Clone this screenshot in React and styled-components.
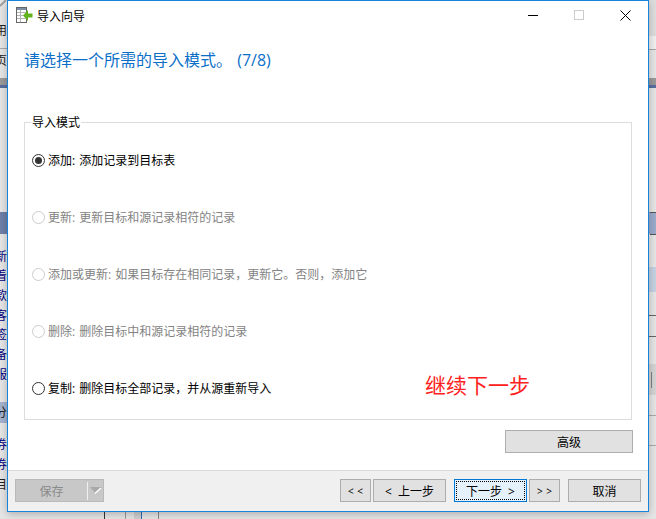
import React from "react";
import styled, { createGlobalStyle } from "styled-components";

const GlobalStyle = createGlobalStyle`
  html, body {
    margin: 0;
    padding: 0;
    width: 656px;
    height: 519px;
    overflow: hidden;
    background: #e6e6e6;
    font-family: "Open Sans", "Noto Sans CJK SC", sans-serif;
  }
`;

const Desktop = styled.div`
  width: 656px;
  height: 519px;
  position: relative;
  overflow: hidden;
`;

const BehindText = styled.span`
  position: absolute;
  left: ${props => props.x}px;
  top: ${props => props.y}px;
  font-size: 12px;
  line-height: 14px;
  color: ${props => props.color || "#000080"};
`;

const BehindBar = styled.div`
  position: absolute;
  left: ${props => props.x}px;
  top: ${props => props.y}px;
  width: ${props => props.w}px;
  height: ${props => props.h}px;
  background: ${props => props.color};
`;

const CornerMark = styled.svg`
  position: absolute;
  left: 0;
  top: 0;
`;

const Dialog = styled.div`
  position: absolute;
  left: 7px;
  top: 0;
  width: 642px;
  height: 512px;
  box-sizing: border-box;
  border: 1px solid #1883d7;
  background: #ffffff;
  display: flex;
  flex-direction: column;
  box-shadow: 0 2px 8px rgba(0, 0, 0, 0.25);
`;

const TitleBar = styled.div`
  height: 29px;
  display: flex;
  align-items: center;
  padding-left: 8px;
  flex-shrink: 0;
`;

const TitleText = styled.span`
  font-size: 12px;
  color: #000000;
  margin-left: 4px;
  flex: 1;
`;

const WindowButton = styled.div`
  width: 46px;
  height: 29px;
  display: flex;
  align-items: center;
  justify-content: center;
`;

const Heading = styled.div`
  margin: 20px 0 0 16px;
  font-size: 16px;
  line-height: 20px;
  height: 20px;
  word-spacing: 1px;
  color: #0b6fc9;
`;

const Content = styled.div`
  flex: 1;
  padding: 52px 16px 0 16px;
  display: flex;
  flex-direction: column;
`;

const Group = styled.div`
  position: relative;
  height: 298px;
  box-sizing: border-box;
  border: 1px solid #dcdcdc;
  padding: 30px 0 0 7px;
  display: flex;
  flex-direction: column;
  gap: 43px;
`;

const GroupLabel = styled.span`
  position: absolute;
  left: 6px;
  top: -7px;
  padding: 0 1px;
  background: #ffffff;
  font-size: 12px;
  line-height: 14px;
  color: #000000;
`;

const OptionRow = styled.div`
  display: flex;
  align-items: center;
  height: 14px;
  font-size: 12px;
  word-spacing: 1px;
  color: ${props => (props.disabled ? "#838383" : "#000000")};
`;

const Radio = styled.span`
  width: 13px;
  height: 13px;
  box-sizing: border-box;
  border-radius: 50%;
  border: 1px solid ${props => (props.disabled ? "#cccccc" : "#333333")};
  margin-right: 3px;
  display: flex;
  align-items: center;
  justify-content: center;

  &::after {
    content: "";
    display: ${props => (props.checked ? "block" : "none")};
    width: 7px;
    height: 7px;
    border-radius: 50%;
    background: #333333;
  }
`;

const Hint = styled.span`
  position: absolute;
  left: 400px;
  top: 249px;
  font-size: 21px;
  line-height: 26px;
  color: #ff2020;
`;

const AdvancedRow = styled.div`
  display: flex;
  justify-content: flex-end;
  margin: 10px -1px 0 0;
`;

const Footer = styled.div`
  height: 41px;
  box-sizing: border-box;
  flex-shrink: 0;
  border-top: 1px solid #d9d9d9;
  background: #f0f0f0;
  display: flex;
  align-items: flex-start;
  padding: 8px 7px 0 7px;
`;

const Button = styled.button`
  width: ${props => props.width || 73}px;
  height: 23px;
  margin-left: ${props => props.gap || 0}px;
  padding: 0;
  box-sizing: border-box;
  border: 1px solid ${props => (props.focused ? "#0078d7" : "#adadad")};
  background: ${props => (props.focused ? "#e5f1fb" : "#e1e1e1")};
  font-family: inherit;
  font-size: ${props => (props.small ? 10 : 12)}px;
  word-spacing: ${props => (props.small ? 1 : 3)}px;
  color: #000000;
  position: relative;
  white-space: pre;

  ${props =>
    props.focused &&
    `&::after {
      content: "";
      position: absolute;
      inset: 1px;
      border: 1px dotted #000000;
    }`}
`;

const SaveSplit = styled.div`
  width: 89px;
  height: 23px;
  box-sizing: border-box;
  border: 1px solid #bababa;
  background: #c8c8c8;
  display: flex;
  align-items: center;
  margin-right: auto;
`;

const SaveLabel = styled.span`
  width: 71px;
  text-align: center;
  font-size: 12px;
  color: #8a8a8a;
`;

const SaveArrow = styled.span`
  flex: 1;
  height: 18px;
  border-left: 1px solid #f0f0f0;
  display: flex;
  align-items: center;
  justify-content: center;
`;

const TableIcon = () => (
  <svg width="17" height="17" viewBox="0 0 17 17">
    <rect x="0.5" y="0.5" width="10" height="15" fill="#fff" stroke="#666666" />
    <path d="M1 1h9v2H1z" fill="#7d8fa5" />
    <path d="M1 5.5h9M1 8.5h9M1 11.5h9M4.5 3v12" stroke="#b4b4b4" fill="none" />
    <path d="M7 8.5l5-5.5v3.5h4.5v4H12V14z" fill="#63b31d" />
  </svg>
);

const backText = [
  { y: 24, t: "用", c: "#222" },
  { y: 54, t: "页", c: "#222" },
  { y: 250, t: "新" },
  { y: 269, t: "着" },
  { y: 289, t: "款" },
  { y: 309, t: "客" },
  { y: 328, t: "签" },
  { y: 348, t: "备" },
  { y: 368, t: "服" },
  { y: 406, t: "分", c: "#222" },
  { y: 438, t: "券" },
  { y: 458, t: "券" },
  { y: 478, t: "目", c: "#222" }
];

const backBars = [
  { x: 0, y: 48, w: 7, h: 1, c: "#a8a8a8" },
  { x: 0, y: 78, w: 7, h: 7, c: "#9a9a9a" },
  { x: 0, y: 85, w: 7, h: 3, c: "#5a6fa0" },
  { x: 0, y: 212, w: 7, h: 22, c: "#6f7fa8" },
  { x: 0, y: 402, w: 7, h: 21, c: "#a5b3cf" },
  { x: 649, y: 0, w: 7, h: 36, c: "#dedede" },
  { x: 649, y: 36, w: 7, h: 13, c: "#f0f0f0" },
  { x: 649, y: 49, w: 7, h: 1, c: "#a8a8a8" },
  { x: 649, y: 78, w: 7, h: 7, c: "#999999" },
  { x: 649, y: 85, w: 7, h: 3, c: "#5a6fa0" },
  { x: 649, y: 212, w: 7, h: 22, c: "#9aaccc" },
  { x: 650, y: 212, w: 6, h: 1, c: "#555555" },
  { x: 650, y: 234, w: 6, h: 1, c: "#555555" },
  { x: 649, y: 267, w: 7, h: 25, c: "#c5d2e2" },
  { x: 649, y: 315, w: 7, h: 1, c: "#666666" },
  { x: 649, y: 336, w: 7, h: 1, c: "#666666" },
  { x: 649, y: 364, w: 7, h: 31, c: "#d4d4d4" },
  { x: 651, y: 372, w: 1, h: 16, c: "#808080" },
  { x: 649, y: 415, w: 7, h: 1, c: "#aaaaaa" },
  { x: 649, y: 445, w: 7, h: 1, c: "#aaaaaa" },
  { x: 104, y: 512, w: 1, h: 7, c: "#333333" },
  { x: 125, y: 512, w: 1, h: 7, c: "#999999" },
  { x: 134, y: 512, w: 7, h: 7, c: "#d0d0d0" },
  { x: 141, y: 512, w: 1, h: 7, c: "#2b6cb8" },
  { x: 158, y: 512, w: 1, h: 7, c: "#888888" }
];

const options = [
  { label: "添加: 添加记录到目标表", checked: true },
  { label: "更新: 更新目标和源记录相符的记录", disabled: true },
  { label: "添加或更新: 如果目标存在相同记录，更新它。否则，添加它", disabled: true },
  { label: "删除: 删除目标中和源记录相符的记录", disabled: true },
  { label: "复制: 删除目标全部记录，并从源重新导入" }
];

export default function App() {
  return (
    <Desktop>
      <GlobalStyle />
      {backBars.map(bar => (
        <BehindBar
          key={`${bar.x}-${bar.y}`}
          x={bar.x}
          y={bar.y}
          w={bar.w}
          h={bar.h}
          color={bar.c}
        />
      ))}
      {backText.map(item => (
        <BehindText key={item.y} x={-5} y={item.y} color={item.c}>
          {item.t}
        </BehindText>
      ))}
      <CornerMark width="7" height="7" viewBox="0 0 7 7">
        <path d="M0 6L6 0" stroke="#a0a0a0" strokeWidth="2" fill="none" />
      </CornerMark>
      <Dialog>
        <TitleBar>
          <TableIcon />
          <TitleText>导入向导</TitleText>
          <WindowButton>
            <svg width="11" height="11" viewBox="0 0 11 11">
              <path d="M0 5.5h10" stroke="#000" fill="none" />
            </svg>
          </WindowButton>
          <WindowButton>
            <svg width="11" height="11" viewBox="0 0 11 11">
              <rect x="0.5" y="0.5" width="9" height="9" stroke="#cccccc" fill="none" />
            </svg>
          </WindowButton>
          <WindowButton>
            <svg width="11" height="11" viewBox="0 0 11 11">
              <path d="M0.5 0.5l10 10M10.5 0.5l-10 10" stroke="#000" fill="none" />
            </svg>
          </WindowButton>
        </TitleBar>
        <Heading>请选择一个所需的导入模式。 (7/8)</Heading>
        <Content>
          <Group>
            <GroupLabel>导入模式</GroupLabel>
            {options.map(option => (
              <OptionRow key={option.label} disabled={option.disabled}>
                <Radio checked={option.checked} disabled={option.disabled} />
                {option.label}
              </OptionRow>
            ))}
            <Hint>继续下一步</Hint>
          </Group>
          <AdvancedRow>
            <Button width={128}>高级</Button>
          </AdvancedRow>
        </Content>
        <Footer>
          <SaveSplit>
            <SaveLabel>保存</SaveLabel>
            <SaveArrow>
              <svg width="12" height="7" viewBox="0 0 12 7">
                <path d="M0 0h12L6 7z" fill="#a9a9a9" />
                <path d="M5 6.5L11 1" stroke="#ffffff" strokeWidth="1.5" fill="none" />
              </svg>
            </SaveArrow>
          </SaveSplit>
          <Button width={31} small>{"< <"}</Button>
          <Button width={73} gap={2}>{"< 上一步"}</Button>
          <Button width={73} gap={8} focused>{"下一步 >"}</Button>
          <Button width={31} gap={2} small>{"> >"}</Button>
          <Button width={73} gap={8}>取消</Button>
        </Footer>
      </Dialog>
    </Desktop>
  );
}
